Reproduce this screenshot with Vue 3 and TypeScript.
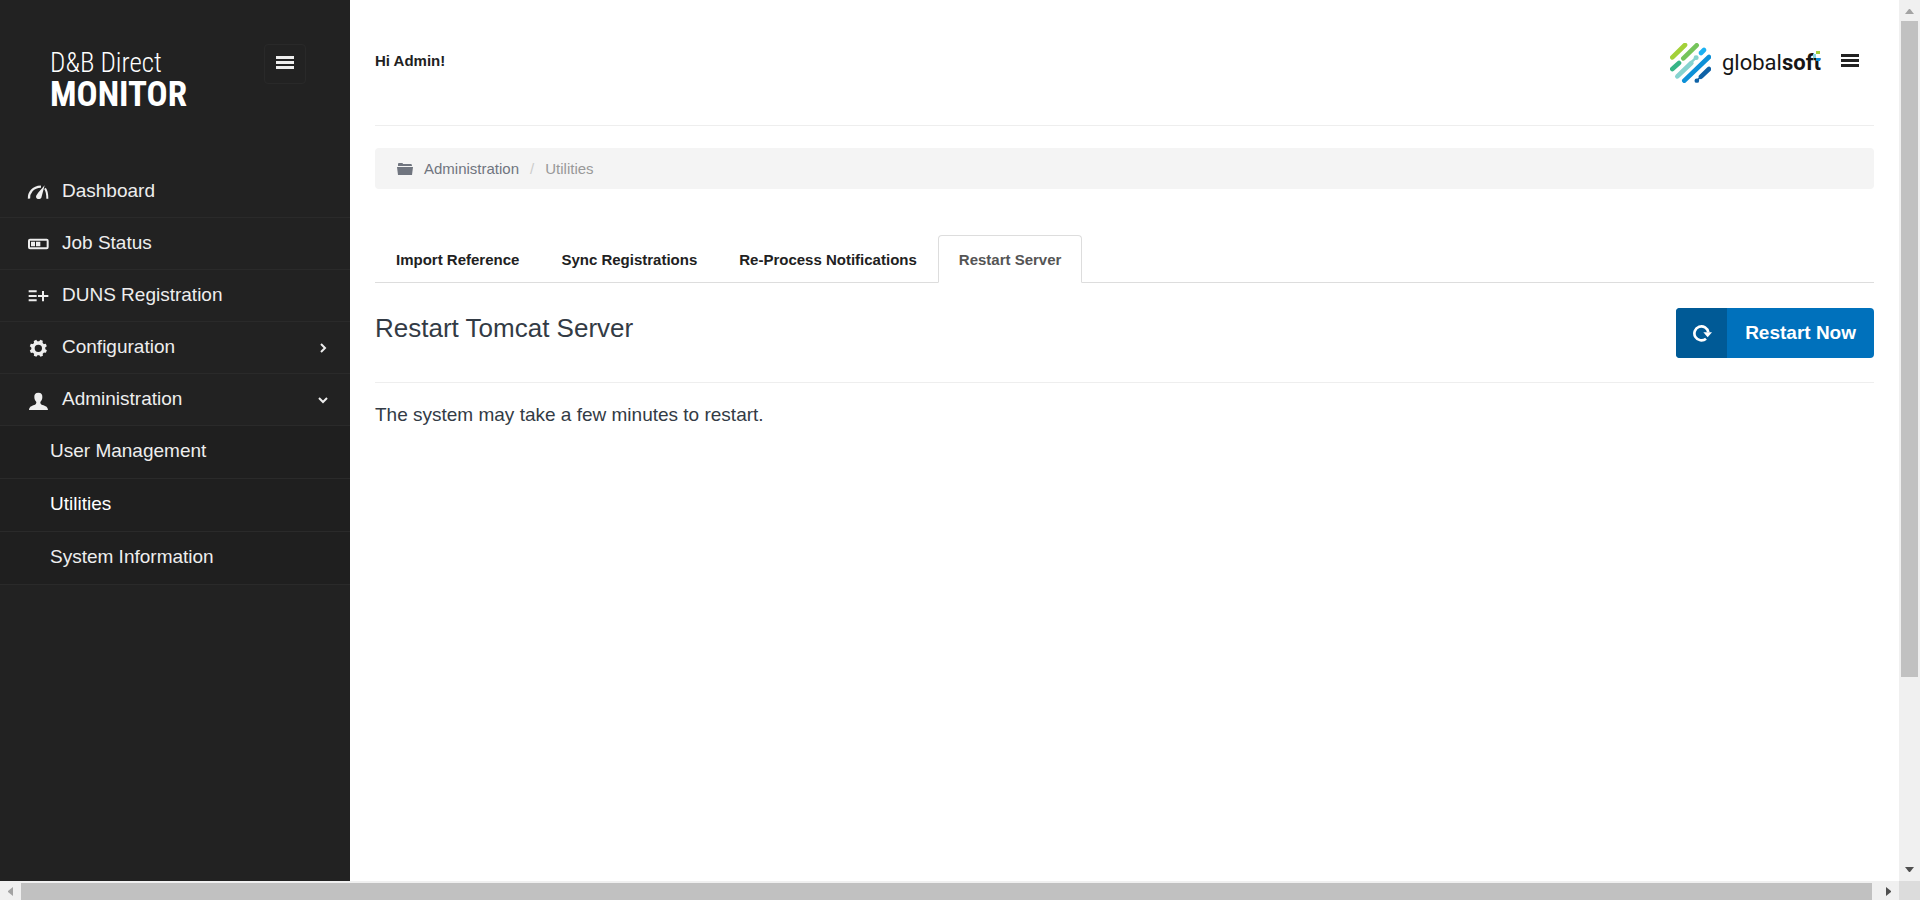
<script setup lang="ts">
import { ref } from 'vue'

type IconName = 'gauge' | 'battery' | 'listplus' | 'gear' | 'user'

interface NavItem {
  label: string
  icon: IconName
  children?: string[]
}

const nav: NavItem[] = [
  { label: 'Dashboard', icon: 'gauge' },
  { label: 'Job Status', icon: 'battery' },
  { label: 'DUNS Registration', icon: 'listplus' },
  { label: 'Configuration', icon: 'gear', children: [] },
  {
    label: 'Administration',
    icon: 'user',
    children: ['User Management', 'Utilities', 'System Information'],
  },
]

const openItem = ref('Administration')
const activePage = ref('Utilities')

const tabs = ['Import Reference', 'Sync Registrations', 'Re-Process Notifications', 'Restart Server']
const activeTab = ref('Restart Server')

const teeth = [0, 45, 90, 135, 180, 225, 270, 315]
</script>

<template>
  <div class="frame">
    <div class="page">
      <aside class="sidebar">
        <div class="brand-row">
          <a class="brand" href="#">
            <span class="brand-top">D&amp;B Direct</span>
            <span class="brand-bottom">MONITOR</span>
          </a>
          <button class="toggle" type="button" aria-label="Toggle menu">
            <svg width="18" height="13" viewBox="0 0 18 13" aria-hidden="true">
              <path d="M0 0h18v3H0zM0 5h18v3H0zM0 10h18v3H0z" fill="currentColor" />
            </svg>
          </button>
        </div>

        <nav>
          <ul class="menu">
            <li v-for="item in nav" :key="item.label">
              <a class="menu-link" href="#">
                <svg class="menu-icon" width="22" height="22" viewBox="0 0 66 66" aria-hidden="true">
                  <g v-if="item.icon === 'gauge'">
                    <path d="M6 53C5 34 17 18 42 17" fill="none" stroke="currentColor" stroke-width="7" />
                    <path d="M54 22C60 30 61 40 61 53" fill="none" stroke="currentColor" stroke-width="6" />
                    <path d="M53 13L43 50C40 56 27 55 27 47C28 40 43 25 53 13Z" fill="currentColor" />
                  </g>
                  <g v-else-if="item.icon === 'battery'">
                    <rect x="6" y="20" width="56" height="26" rx="3" fill="none" stroke="currentColor" stroke-width="6" />
                    <path d="M12 26h12v14H12zM27 26h13v14H27z" fill="currentColor" />
                  </g>
                  <path
                    v-else-if="item.icon === 'listplus'"
                    d="M5 16h24v6H5zM5 30h24v6H5zM5 43h24v6H5zM45 18h6v12h13v6H51v13h-6V36H33v-6h12z"
                    fill="currentColor"
                  />
                  <g v-else-if="item.icon === 'gear'">
                    <circle cx="34" cy="34" r="16" fill="none" stroke="currentColor" stroke-width="10" />
                    <path
                      v-for="angle in teeth"
                      :key="angle"
                      d="M28 16L30 8H38L40 16Z"
                      fill="currentColor"
                      :transform="`rotate(${angle + 22} 34 34)`"
                    />
                  </g>
                  <path
                    v-else
                    d="M34 11C43 11 47 16 46 25C46 32 43 36 40 39C40 44 41 46 46 48C56 51 62 53 63 63H6C7 53 13 51 22 48C27 46 28 44 28 39C25 36 22 32 22 25C21 16 25 11 34 11Z"
                    fill="currentColor"
                  />
                </svg>
                <span class="menu-label">{{ item.label }}</span>
                <svg v-if="item.children" class="chevron" width="10" height="10" viewBox="0 0 10 10" aria-hidden="true">
                  <path
                    :d="openItem === item.label ? 'M1 3L5 7L9 3' : 'M3 1L7 5L3 9'"
                    fill="none"
                    stroke="currentColor"
                    stroke-width="2"
                  />
                </svg>
              </a>
              <ul v-if="item.children && openItem === item.label" class="submenu">
                <li v-for="child in item.children" :key="child">
                  <a class="sub-link" :class="{ current: child === activePage }" href="#">{{ child }}</a>
                </li>
              </ul>
            </li>
          </ul>
        </nav>
      </aside>

      <main class="content">
        <header class="topbar">
          <strong class="greeting">Hi Admin!</strong>
          <div class="top-right">
            <a class="company" href="#">
              <svg width="41" height="40" viewBox="0 0 123 120" fill="none" stroke-linecap="round" stroke-width="14" aria-hidden="true">
                <path d="M7 43L45 6" stroke="#a3d139" />
                <path d="M40 46L80 7" stroke="#75c45b" />
                <path d="M93 30L102 21" stroke="#1bb1f2" />
                <path d="M7 78L27 60" stroke="#36b587" />
                <path d="M22 100L64 60" stroke="#86d3cf" />
                <path d="M60 62L78 44" stroke="#86d3cf" stroke-width="7" />
                <path d="M78 44h1" stroke="#86d3cf" />
                <path d="M43 113L117 42" stroke="#0d90d7" />
                <path d="M93 101L117 78" stroke="#0f62a6" />
                <path d="M80 113L93 101" stroke="#0f62a6" stroke-width="5" />
                <path d="M80 113h1" stroke="#0f62a6" stroke-width="13" />
              </svg>
              <span class="wordmark">
                global<b>soft</b>
                <svg class="pixels" width="8" height="10" viewBox="0 0 8 10" aria-hidden="true">
                  <path d="M4 0h4v3H4z" fill="#a3d139" />
                  <path d="M1 3h3v4H1z" fill="#86d9e0" />
                  <path d="M4 3h4v4H4z" fill="#fff" />
                  <path d="M4 7h4v3H4z" fill="#0d90d7" />
                </svg>
              </span>
            </a>
            <button class="options" type="button" aria-label="Options">
              <svg width="18" height="13" viewBox="0 0 18 13" aria-hidden="true">
                <path d="M0 0h18v3H0zM0 5h18v3H0zM0 10h18v3H0z" fill="currentColor" />
              </svg>
            </button>
          </div>
        </header>

        <nav class="breadcrumb" aria-label="Breadcrumb">
          <svg width="16" height="12" viewBox="0 0 16 12" aria-hidden="true">
            <path d="M1 3V1Q1 0 2 0H5Q6 0 6 1H14Q15 1 15 3ZM0 4H16L15 12H1Z" fill="currentColor" />
          </svg>
          <a href="#">Administration</a>
          <span class="slash">/</span>
          <span class="here">Utilities</span>
        </nav>

        <div class="tabs" role="tablist">
          <button
            v-for="tab in tabs"
            :key="tab"
            class="tab"
            :class="{ active: tab === activeTab }"
            type="button"
            role="tab"
            :aria-selected="tab === activeTab"
            @click="activeTab = tab"
          >
            {{ tab }}
          </button>
        </div>

        <section class="panel">
          <div class="panel-head">
            <h3>Restart Tomcat Server</h3>
            <button class="restart" type="button">
              <span class="restart-icon">
                <svg width="20" height="18" viewBox="0 0 60 54" aria-hidden="true">
                  <path d="M42 44A21 21 0 1 1 49 25" fill="none" stroke="currentColor" stroke-width="8" />
                  <path d="M34 25H60L47 40Z" fill="currentColor" />
                </svg>
              </span>
              <span class="restart-text">Restart Now</span>
            </button>
          </div>
          <p>The system may take a few minutes to restart.</p>
        </section>
      </main>
    </div>

    <div class="bar vertical" aria-hidden="true">
      <svg width="9" height="5" viewBox="0 0 9 5"><path d="M0 5L4 0H5L9 5Z" fill="#a3a3a3" /></svg>
      <div class="track"><div class="thumb"></div></div>
      <svg width="9" height="5" viewBox="0 0 9 5"><path d="M0 0L4 5H5L9 0Z" fill="#505050" /></svg>
    </div>
    <div class="bar horizontal" aria-hidden="true">
      <svg width="5" height="9" viewBox="0 0 5 9"><path d="M5 0L0 4V5L5 9Z" fill="#a3a3a3" /></svg>
      <div class="track"><div class="thumb"></div></div>
      <svg width="5" height="9" viewBox="0 0 5 9"><path d="M0 0L5 4V5L0 9Z" fill="#505050" /></svg>
    </div>
    <div class="corner"></div>
  </div>
</template>

<style>
body {
  margin: 0;
}
</style>

<style scoped>
.frame {
  display: grid;
  grid-template-columns: minmax(0, 1fr) 21px;
  grid-template-rows: minmax(0, 1fr) 19px;
  height: 100vh;
  overflow: hidden;
  background: #fff;
  color: #333b45;
  font-family: "Liberation Sans", Arial, sans-serif;
  font-size: 15px;
}

* {
  box-sizing: border-box;
}

button {
  font-family: inherit;
  cursor: pointer;
}

a {
  color: inherit;
  text-decoration: none;
}

ul {
  list-style: none;
  margin: 0;
  padding: 0;
}

svg {
  display: block;
  flex: none;
}

.page {
  display: flex;
  overflow: hidden;
}

.sidebar {
  flex: none;
  width: 350px;
  background: #222;
  color: #eee;
}

.brand-row {
  display: flex;
  justify-content: space-between;
  align-items: flex-start;
  height: 166px;
  padding: 44px 44px 0 50px;
}

.brand {
  display: flex;
  flex-direction: column;
  padding-top: 4px;
  color: #fff;
  font-family: "Roboto Condensed", Roboto, sans-serif;
}

.brand-top {
  font-size: 27px;
  font-weight: 300;
  line-height: 30px;
}

.brand-bottom {
  font-size: 35px;
  font-weight: 700;
  line-height: 34px;
}

.toggle {
  display: flex;
  align-items: flex-start;
  justify-content: center;
  width: 42px;
  height: 40px;
  padding: 11px 0 0;
  border: 1px solid #292929;
  border-radius: 4px;
  background: none;
  color: #eee;
}

.menu-link,
.sub-link {
  display: flex;
  align-items: center;
  height: 52px;
  border-bottom: 1px solid #2a2a2a;
  font-size: 19px;
}

.menu-link {
  gap: 13px;
  padding: 0 22px 0 27px;
}

.menu-label {
  flex: 1;
  line-height: 22px;
  padding-bottom: 2px;
}

.submenu {
  background: #1f1f1f;
}

.sub-link {
  height: 53px;
  padding: 0 22px 2px 50px;
}

.current {
  color: #fff;
}

.content {
  flex: 1;
  min-width: 0;
  padding: 0 25px;
}

.topbar {
  display: flex;
  justify-content: space-between;
  align-items: flex-start;
  height: 126px;
  border-bottom: 1px solid #eee;
}

.greeting {
  margin-top: 52px;
  color: #212121;
  line-height: 18px;
}

.top-right {
  display: flex;
  align-items: flex-start;
  gap: 21px;
  padding: 43px 15px 0 0;
}

.company {
  display: flex;
  align-items: center;
  gap: 11px;
}

.wordmark {
  position: relative;
  width: 98px;
  color: #161616;
  font-family: "Roboto Slab", Roboto, sans-serif;
  font-size: 22px;
  line-height: 38px;
}

.pixels {
  position: absolute;
  top: 7px;
  right: 0;
}

.options {
  margin-top: 11px;
  padding: 0;
  border: 0;
  background: none;
  color: #222;
}

.breadcrumb {
  display: flex;
  align-items: center;
  height: 41px;
  margin-top: 22px;
  padding: 0 22px;
  border-radius: 4px;
  background: #f4f4f4;
  color: #70757f;
}

.breadcrumb a {
  margin-left: 11px;
}

.slash {
  margin: 0 11px;
  color: #ccc;
}

.here {
  color: #999;
}

.tabs {
  display: flex;
  margin-top: 46px;
  border-bottom: 1px solid #ddd;
}

.tab {
  height: 48px;
  margin-bottom: -1px;
  padding: 0 20px;
  border: 1px solid transparent;
  border-radius: 4px 4px 0 0;
  background: none;
  color: #212121;
  font-size: 15px;
  font-weight: 700;
}

.tab.active {
  border-color: #ddd;
  border-bottom-color: #fff;
  background: #fff;
  color: #555;
}

.panel-head {
  display: flex;
  justify-content: space-between;
  align-items: flex-start;
  padding: 25px 0 24px;
  border-bottom: 1px solid #eee;
}

h3 {
  margin: 5px 0 0;
  font-size: 26px;
  font-weight: 400;
  line-height: 30px;
}

.restart {
  display: flex;
  height: 50px;
  padding: 0;
  overflow: hidden;
  border: 0;
  border-radius: 4px;
  background: #0071bc;
  color: #fff;
  font-size: 19px;
  font-weight: 700;
}

.restart-icon {
  display: flex;
  align-items: center;
  justify-content: center;
  width: 51px;
  height: 100%;
  background: #005a96;
}

.restart-text {
  padding: 0 18px;
  line-height: 50px;
}

p {
  margin: 20px 0 0;
  font-size: 19px;
  line-height: 24px;
}

.bar {
  display: flex;
  align-items: center;
  background: #f0f0f0;
}

.vertical {
  flex-direction: column;
  padding: 9px 0;
}

.vertical .track {
  flex: 1;
  width: 17px;
  margin: 7px 0 15px;
}

.vertical .thumb {
  height: 79%;
  background: #c1c1c1;
}

.horizontal {
  gap: 14px;
  padding: 2px 8px 0;
}

.horizontal .track {
  flex: 1;
  height: 100%;
  margin-left: -6px;
}

.horizontal .thumb {
  height: 100%;
  background: #c1c1c1;
}

.corner {
  background: #dcdcdc;
}
</style>
